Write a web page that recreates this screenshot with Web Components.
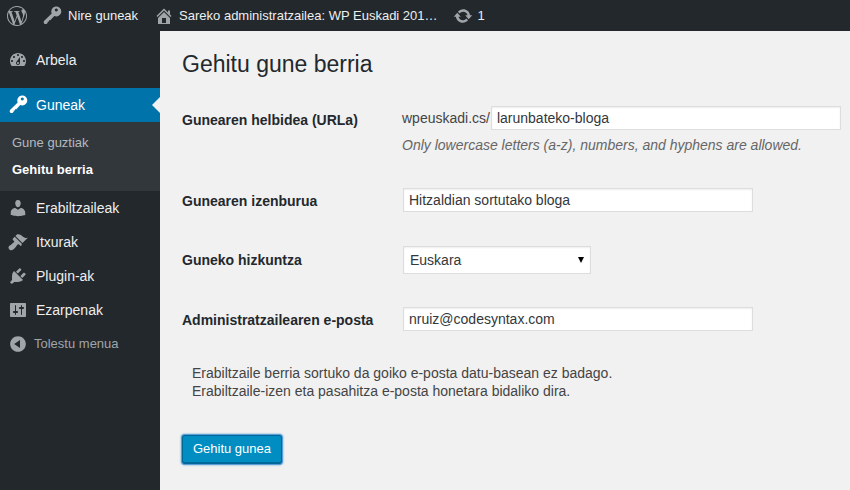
<!DOCTYPE html>
<html lang="eu">
<head>
<meta charset="utf-8">
<title>Gehitu gune berria</title>
<style>
  html, body { margin: 0; height: 490px; overflow: hidden; background: #f1f1f1; }
  body { font-family: "Liberation Sans", Arial, sans-serif; display: flex; flex-direction: column; }
</style>
</head>
<body>
<wp-admin-bar>
  <bar-item icon="wp"></bar-item>
  <bar-item icon="key">Nire guneak</bar-item>
  <bar-item icon="home" style="--gap:5px;margin-left:1px">Sareko administratzailea: WP Euskadi 201…</bar-item>
  <bar-item icon="update" style="--gap:5px">1</bar-item>
</wp-admin-bar>
<admin-layout>
  <admin-menu slot="menu">
    <menu-item icon="dashboard">Arbela</menu-item>
    <menu-item icon="key" current>Guneak</menu-item>
    <sub-menu>
      <sub-item>Gune guztiak</sub-item>
      <sub-item current>Gehitu berria</sub-item>
    </sub-menu>
    <menu-item icon="users">Erabiltzaileak</menu-item>
    <menu-item icon="appearance">Itxurak</menu-item>
    <menu-item icon="plugins">Plugin-ak</menu-item>
    <menu-item icon="settings">Ezarpenak</menu-item>
    <menu-item icon="collapse" collapse>Tolestu menua</menu-item>
  </admin-menu>
  <new-site-form>
    <form-row label="Gunearen helbidea (URLa)" style="--after:33px;--label-top:2px">
      <div style="display:flex;align-items:center;margin-left:-1px">
        <span>wpeuskadi.cs/</span>
        <text-box style="width:350px;margin-left:1px">larunbateko-bloga</text-box>
      </div>
      <em style="display:block;margin:5px 0 0 -1px;line-height:20px;color:#666">Only lowercase letters (a-z), numbers, and hyphens are allowed.</em>
    </form-row>
    <form-row label="Gunearen izenburua" style="--after:33px">
      <text-box style="width:350px">Hitzaldian sortutako bloga</text-box>
    </form-row>
    <form-row label="Guneko hizkuntza" style="--after:33px;--label-top:2px">
      <select-box style="width:188px">Euskara</select-box>
    </form-row>
    <form-row label="Administratzailearen e-posta" style="--after:32px">
      <text-box style="width:350px">nruiz@codesyntax.com</text-box>
    </form-row>
    <p slot="note">Erabiltzaile berria sortuko da goiko e-posta datu-basean ez badago.<br>Erabiltzaile-izen eta pasahitza e-posta honetara bidaliko dira.</p>
    <primary-button slot="action">Gehitu gunea</primary-button>
  </new-site-form>
</admin-layout>
<script>
const ICONS = {
  wp: ["0 0 24 24", "M21.469 6.825c.84 1.537 1.318 3.3 1.318 5.175 0 3.979-2.156 7.456-5.363 9.325l3.295-9.527c.615-1.54.82-2.771.82-3.864 0-.405-.026-.78-.07-1.11m-7.981.105c.647-.03 1.232-.105 1.232-.105.582-.075.514-.93-.067-.899 0 0-1.755.135-2.88.135-1.064 0-2.85-.15-2.85-.15-.585-.03-.661.855-.075.885 0 0 .54.061 1.125.09l1.68 4.605-2.37 7.08L5.354 6.9c.649-.03 1.234-.1 1.234-.1.585-.075.516-.93-.065-.896 0 0-1.746.138-2.874.138-.2 0-.438-.008-.69-.015C4.911 3.15 8.235 1.215 12 1.215c2.809 0 5.365 1.072 7.286 2.833-.046-.003-.091-.009-.141-.009-1.06 0-1.812.923-1.812 1.914 0 .89.513 1.643 1.06 2.531.411.72.89 1.643.89 2.977 0 .915-.354 1.994-.821 3.479l-1.075 3.585-3.9-11.61.001.014zM12 22.784c-1.059 0-2.081-.153-3.048-.437l3.237-9.406 3.315 9.087c.024.053.05.101.078.149-1.12.393-2.325.609-3.582.609M1.211 12c0-1.564.336-3.05.935-4.39L7.29 21.709C3.694 19.96 1.212 16.271 1.211 12M12 0C5.385 0 0 5.385 0 12s5.385 12 12 12 12-5.385 12-12S18.615 0 12 0"],
  key: ["0 0 20 20", "M9.7 7.5L2 15l-.4 1.6 1 1.4h1.9l1.2-1.2v-1.3H7v-1.3h1.3l4-4.1A5 5 0 1 0 9.7 7.5zM14.3 2.4a1.5 1.5 0 1 0 .01 0z"],
  home: ["0 0 20 20", "M16 8.5l1.53 1.53-1.06 1.06L10 4.62l-6.47 6.47-1.06-1.06L10 2.5l4 4v-2h2v4zm-6-2.46l6 5.99V18H4v-5.97zM12 17v-5H8v5h4z"],
  update: ["0 0 20 20", "M10.2 3.28c3.53 0 6.43 2.61 6.92 6h2.08l-3.5 4-3.5-4h2.32c-.45-1.97-2.21-3.45-4.32-3.45-1.45 0-2.73.71-3.54 1.78L4.95 5.66C6.23 4.2 8.11 3.28 10.2 3.28zm-.4 13.44c-3.52 0-6.43-2.61-6.92-6H.8l3.5-4c1.17 1.33 2.33 2.67 3.5 4H5.48c.45 1.97 2.21 3.45 4.32 3.45 1.45 0 2.73-.71 3.54-1.78l1.71 1.95c-1.28 1.46-3.15 2.38-5.25 2.38z"],
  dashboard: ["0 0 20 20", "M3.76 16h12.48c1.1-1.37 1.76-3.11 1.76-5 0-4.42-3.58-8-8-8s-8 3.58-8 8c0 1.89.66 3.63 1.76 5zM10 4c.55 0 1 .45 1 1s-.45 1-1 1-1-.45-1-1 .45-1 1-1zM6 6c.55 0 1 .45 1 1s-.45 1-1 1-1-.45-1-1 .45-1 1-1zm8 0c.55 0 1 .45 1 1s-.45 1-1 1-1-.45-1-1 .45-1 1-1zm-5.37 5.55L12 7v6c0 1.1-.9 2-2 2s-2-.9-2-2c0-.57.24-1.08.63-1.45zM4 10c.55 0 1 .45 1 1s-.45 1-1 1-1-.45-1-1 .45-1 1-1zm12 0c.55 0 1 .45 1 1s-.45 1-1 1-1-.45-1-1 .45-1 1-1zm-5 3c0-.55-.45-1-1-1s-1 .45-1 1 .45 1 1 1 1-.45 1-1z"],
  users: ["0 0 20 20", "M10 9.25c-2.27 0-2.73-3.44-2.73-3.44C7 4.02 7.82 2 9.97 2c2.16 0 2.98 2.02 2.71 3.81 0 0-.41 3.44-2.68 3.44zm0 2.57L12.72 10c2.39 0 4.52 2.33 4.52 4.53v2.49s-3.65 1.13-7.24 1.13c-3.65 0-7.24-1.13-7.24-1.13v-2.49c0-2.25 1.94-4.48 4.47-4.48z"],
  appearance: ["0 0 20 20", "M14.48 11.06L7.41 3.99l1.5-1.5c.5-.56 2.3-.47 3.51.32 1.21.8 1.43 1.28 2.91 2.1 1.18.64 2.45 1.26 4.45.85zm-.71.71L6.7 4.7 4.93 6.47c-.39.39-.39 1.02 0 1.41l1.06 1.06c.39.39.39 1.03 0 1.42-.6.6-1.43 1.11-2.21 1.69-.35.26-.7.53-1.01.84C1.43 13.23.5 14.3.5 15.5c0 .7.3 1.4.85 1.95.55.55 1.25.85 1.95.85 1.4 0 2.5-1.2 3.8-2.5.34-.34.6-.7.85-1.05.58-.78 1.09-1.61 1.69-2.21.39-.39 1.03-.39 1.42 0l1.06 1.06c.39.39 1.02.39 1.41 0z"],
  plugins: ["0 0 20 20", "M13.11 4.36L9.87 7.6 8 5.73l3.24-3.24c.35-.34 1.05-.2 1.56.32.52.51.66 1.21.31 1.55zm-8 1.77l.91-1.12 9.01 9.01-1.19.84c-.71.71-2.63 1.16-3.82 1.16H6.14L4.9 17.26c-.59.59-1.54.59-2.12 0-.59-.58-.59-1.53 0-2.12l1.24-1.24v-3.88c0-1.13.4-3.19 1.09-3.89zm7.26 3.97l3.24-3.24c.34-.35 1.04-.21 1.55.31.52.51.66 1.21.31 1.55l-3.24 3.25z"],
  settings: ["0 0 20 20", "M18 16V4c0-.55-.45-1-1-1H3c-.55 0-1 .45-1 1v12c0 .55.45 1 1 1h14c.55 0 1-.45 1-1zM8 11h1c.55 0 1 .45 1 1s-.45 1-1 1H8v1.5c0 .28-.22.5-.5.5s-.5-.22-.5-.5V13H6c-.55 0-1-.45-1-1s.45-1 1-1h1V5.5c0-.28.22-.5.5-.5s.5.22.5.5V11zm5-2h-1c-.55 0-1-.45-1-1s.45-1 1-1h1V5.5c0-.28.22-.5.5-.5s.5.22.5.5V7h1c.55 0 1 .45 1 1s-.45 1-1 1h-1v5.5c0 .28-.22.5-.5.5s-.5-.22-.5-.5V9z"],
  collapse: ["0 0 20 20", "M10 2.16c4.33 0 7.84 3.51 7.84 7.84s-3.51 7.84-7.84 7.84S2.16 14.33 2.16 10 5.71 2.16 10 2.16zm2 11.72V6.12L6.18 9.97z"]
};

function iconSvg(name) {
  const [box, d] = ICONS[name];
  return `<svg viewBox="${box}" width="20" height="20" fill="currentColor" aria-hidden="true"><path fill-rule="${name === "key" ? "evenodd" : "nonzero"}" d="${d}"/></svg>`;
}

class WpAdminBar extends HTMLElement {
  constructor() {
    super();
    this.attachShadow({ mode: "open" });
    this.shadowRoot.innerHTML = `
      <style>
        :host {
          display: flex;
          flex: none;
          height: 31px;
          background: #23282d;
          color: #eee;
          font-size: 13px;
          padding-left: 7px;
          gap: 15px;
        }
      </style>
      <slot></slot>`;
  }
}

class BarItem extends HTMLElement {
  constructor() {
    super();
    this.attachShadow({ mode: "open" });
  }
  connectedCallback() {
    this.shadowRoot.innerHTML = `
      <style>
        :host { display: flex; align-items: center; gap: var(--gap, 6px); line-height: 31px; }
        svg { color: #a0a5aa; flex: none; display: block; }
      </style>
      ${iconSvg(this.getAttribute("icon"))}<slot></slot>`;
  }
}

class AdminLayout extends HTMLElement {
  constructor() {
    super();
    this.attachShadow({ mode: "open" });
    this.shadowRoot.innerHTML = `
      <style>
        :host { display: flex; flex: 1; min-height: 0; }
        .side { flex: none; width: 160px; background: #23282d; }
        .main { flex: 1; min-width: 0; }
      </style>
      <div class="side"><slot name="menu"></slot></div>
      <div class="main"><slot></slot></div>`;
  }
}

class AdminMenu extends HTMLElement {
  constructor() {
    super();
    this.attachShadow({ mode: "open" });
    this.shadowRoot.innerHTML = `
      <style>
        :host { display: flex; flex-direction: column; padding-top: 12px; }
        ::slotted(menu-item[current]) { margin-top: 11px; }
      </style>
      <slot></slot>`;
  }
}

class MenuItem extends HTMLElement {
  constructor() {
    super();
    this.attachShadow({ mode: "open" });
  }
  connectedCallback() {
    this.shadowRoot.innerHTML = `
      <style>
        :host {
          display: flex;
          align-items: center;
          position: relative;
          height: 34px;
          padding-left: 8px;
          gap: 8px;
          font-size: 14px;
          color: #eee;
        }
        :host([current]) { background: #0073aa; color: #fff; }
        :host([current]) svg { color: #fff; }
        :host([current])::after {
          content: "";
          position: absolute;
          right: 0;
          top: 50%;
          margin-top: -8px;
          border: 8px solid transparent;
          border-right-color: #f1f1f1;
          border-left-width: 0;
        }
        :host([collapse]) { font-size: 13px; color: #a0a5aa; gap: 6px; height: 33px; }
        svg { color: #a0a5aa; flex: none; display: block; }
      </style>
      ${iconSvg(this.getAttribute("icon"))}<span><slot></slot></span>`;
  }
}

class SubMenu extends HTMLElement {
  constructor() {
    super();
    this.attachShadow({ mode: "open" });
    this.shadowRoot.innerHTML = `
      <style>
        :host { display: block; background: #32373c; padding: 8px 0; }
      </style>
      <slot></slot>`;
  }
}

class SubItem extends HTMLElement {
  constructor() {
    super();
    this.attachShadow({ mode: "open" });
    this.shadowRoot.innerHTML = `
      <style>
        :host { display: block; height: 26px; line-height: 26px; padding-left: 12px; font-size: 13px; color: #b4b9be; }
        :host([current]) { color: #fff; font-weight: bold; margin-top: 1px; }
      </style>
      <slot></slot>`;
  }
}

class NewSiteForm extends HTMLElement {
  constructor() {
    super();
    this.attachShadow({ mode: "open" });
    this.shadowRoot.innerHTML = `
      <style>
        :host { display: block; padding: 0 9px 0 22px; color: #444; font-size: 14px; }
        h1 { margin: 0; padding: 18px 0 27px; font-size: 23px; font-weight: 400; line-height: 30px; color: #23282d; }
        .note { padding: 0 0 0 10px; }
        ::slotted(p) { margin: 0; line-height: 18px; color: #444; }
        .action { margin-top: 35px; }
      </style>
      <h1>Gehitu gune berria</h1>
      <slot></slot>
      <div class="note"><slot name="note"></slot></div>
      <div class="action"><slot name="action"></slot></div>`;
  }
}

class FormRow extends HTMLElement {
  constructor() {
    super();
    this.attachShadow({ mode: "open" });
  }
  connectedCallback() {
    this.shadowRoot.innerHTML = `
      <style>
        :host { display: grid; grid-template-columns: 221px 1fr; margin-bottom: var(--after, 33px); }
        label { font-weight: bold; color: #23282d; line-height: 24px; padding-top: var(--label-top, 1px); }
      </style>
      <label>${this.getAttribute("label")}</label>
      <div><slot></slot></div>`;
  }
}

class TextBox extends HTMLElement {
  constructor() {
    super();
    this.attachShadow({ mode: "open" });
    this.shadowRoot.innerHTML = `
      <style>
        :host {
          display: block;
          box-sizing: border-box;
          height: 24px;
          line-height: 22px;
          padding: 0 5px;
          background: #fff;
          border: 1px solid #ddd;
          box-shadow: inset 0 1px 2px rgba(0, 0, 0, 0.07);
          color: #32373c;
          font-size: 14px;
          flex: none;
        }
      </style>
      <slot></slot>`;
  }
}

class SelectBox extends HTMLElement {
  constructor() {
    super();
    this.attachShadow({ mode: "open" });
    this.shadowRoot.innerHTML = `
      <style>
        :host {
          display: flex;
          align-items: center;
          justify-content: space-between;
          box-sizing: border-box;
          height: 28px;
          padding: 0 6px 0 6px;
          background: #fff;
          border: 1px solid #ddd;
          box-shadow: inset 0 1px 2px rgba(0, 0, 0, 0.07);
          color: #32373c;
          font-size: 14px;
        }
        i { width: 0; height: 0; border: 3px solid transparent; border-top: 6px solid #000; border-bottom: 0; }
      </style>
      <span><slot></slot></span><i></i>`;
  }
}

class PrimaryButton extends HTMLElement {
  constructor() {
    super();
    this.attachShadow({ mode: "open" });
    this.shadowRoot.innerHTML = `
      <style>
        :host { display: inline-block; }
        button {
          display: block;
          box-sizing: border-box;
          height: 29px;
          width: 100px;
          padding: 0;
          font: 13px/26px "Liberation Sans", Arial, sans-serif;
          color: #fff;
          background: #008ec2;
          border: 1px solid #006799;
          border-bottom-width: 2px;
          border-radius: 3px;
          box-shadow: 0 0 0 1px #5b9dd9, 0 0 2px 1px rgba(30, 140, 190, 0.8);
        }
      </style>
      <button type="button"><slot></slot></button>`;
  }
}

customElements.define("wp-admin-bar", WpAdminBar);
customElements.define("bar-item", BarItem);
customElements.define("admin-layout", AdminLayout);
customElements.define("admin-menu", AdminMenu);
customElements.define("menu-item", MenuItem);
customElements.define("sub-menu", SubMenu);
customElements.define("sub-item", SubItem);
customElements.define("new-site-form", NewSiteForm);
customElements.define("form-row", FormRow);
customElements.define("text-box", TextBox);
customElements.define("select-box", SelectBox);
customElements.define("primary-button", PrimaryButton);
</script>
</body>
</html>
